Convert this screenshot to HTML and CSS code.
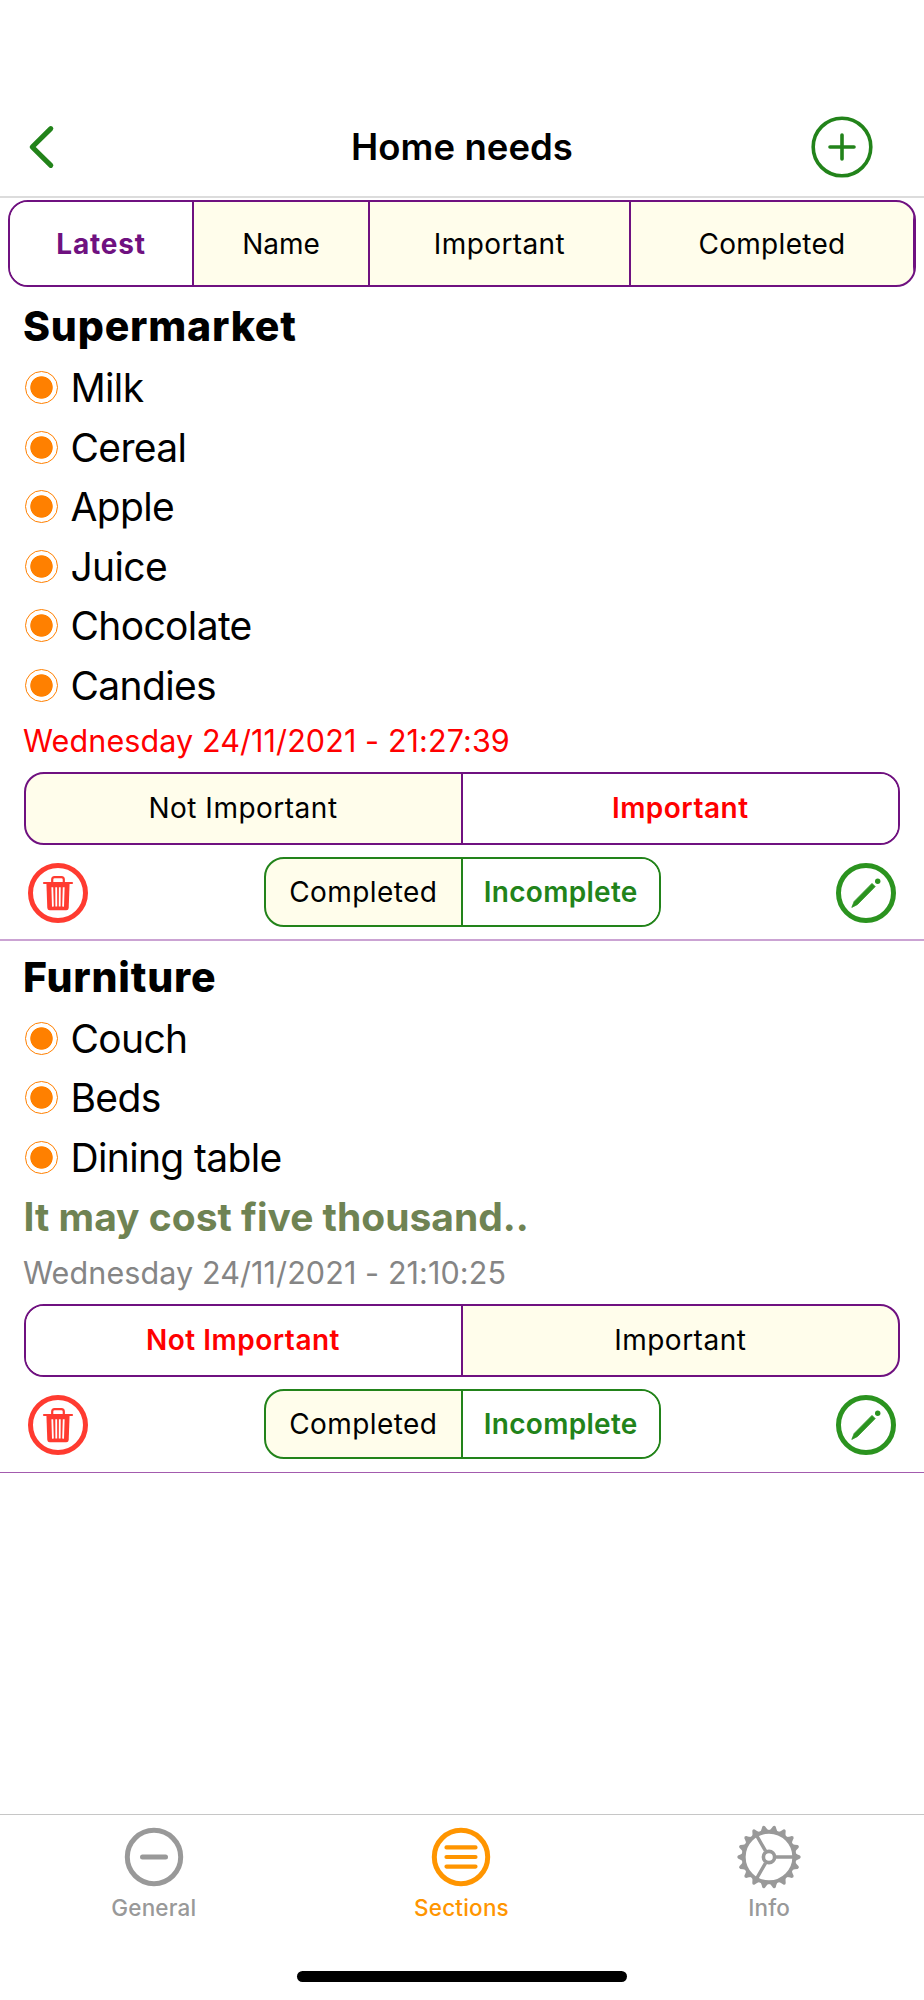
FILE: index.html
```html
<!DOCTYPE html>
<html lang="en">
<head>
<meta charset="utf-8">
<title>Home needs</title>
<link rel="stylesheet" href="styles.css">
</head>
<body>
<svg class="defs" width="0" height="0">
  <symbol id="trash" viewBox="0 0 60 60">
    <circle cx="30" cy="30" r="27.5" fill="none" stroke="#ff3b30" stroke-width="5"/>
    <path d="M24.2 19.5v-3q0-2.4 2.4-2.4h6.8q2.4 0 2.4 2.4v3" fill="none" stroke="#ff3b30" stroke-width="2.2"/>
    <path d="M16 20h28" stroke="#ff3b30" stroke-width="2.2" stroke-linecap="round"/>
    <path d="M18.4 20h23.2l-.9 25q-.2 2.3-2.4 2.3H21.7q-2.2 0-2.4-2.3z" fill="#ff3b30"/>
    <path d="M24.3 24.2l.6 19.4M28.2 24.2l.1 19.4M31.8 24.2l-.1 19.4M35.7 24.2l-.6 19.4" stroke="#fff" stroke-width="1.8"/>
  </symbol>
  <symbol id="edit" viewBox="0 0 60 60">
    <circle cx="30" cy="30" r="27.5" fill="none" stroke="#2b931f" stroke-width="5"/>
    <path d="M36 20.4L39.2 23.6L21.4 41.6L15.8 44.4L18.2 38.4z" fill="#2b931f" stroke="#2b931f" stroke-width=".8" stroke-linejoin="round"/>
    <circle cx="41.7" cy="18.3" r="2.7" fill="#2b931f"/>
  </symbol>
</svg>
<div class="screen">
  <header class="nav">
    <svg class="nav-back" width="30" height="48" viewBox="0 0 30 48"><path d="M24.8 5.6L6.2 24L24.8 42.4" fill="none" stroke="#22831a" stroke-width="5" stroke-linecap="round" stroke-linejoin="round"/></svg>
    <h1 class="nav-title">Home needs</h1>
    <svg class="nav-add" width="62" height="62" viewBox="0 0 62 62"><g fill="none" stroke="#22831a" stroke-linecap="round"><circle cx="31" cy="31" r="28.8" stroke-width="3.6"/><path d="M31 19v24M19 31h24" stroke-width="3.6"/></g></svg>
  </header>

  <div class="segment sort">
    <div class="seg selected latest">Latest</div>
    <div class="seg name">Name</div>
    <div class="seg important">Important</div>
    <div class="seg completed">Completed</div>
  </div>

  <section class="note">
    <h2 class="note-title">Supermarket</h2>
    <ul class="items">
      <li>Milk</li>
      <li>Cereal</li>
      <li>Apple</li>
      <li>Juice</li>
      <li>Chocolate</li>
      <li>Candies</li>
    </ul>
    <div class="date urgent">Wednesday 24/11/2021 - 21:27:39</div>
    <div class="segment priority">
      <div class="seg">Not Important</div>
      <div class="seg selected">Important</div>
    </div>
    <div class="actions">
      <svg class="action"><use href="#trash"/></svg>
      <div class="segment status">
        <div class="seg">Completed</div>
        <div class="seg selected">Incomplete</div>
      </div>
      <svg class="action"><use href="#edit"/></svg>
    </div>
  </section>

  <section class="note last">
    <h2 class="note-title">Furniture</h2>
    <ul class="items">
      <li>Couch</li>
      <li>Beds</li>
      <li>Dining table</li>
    </ul>
    <div class="remark">It may cost five thousand..</div>
    <div class="date">Wednesday 24/11/2021 - 21:10:25</div>
    <div class="segment priority">
      <div class="seg selected">Not Important</div>
      <div class="seg">Important</div>
    </div>
    <div class="actions">
      <svg class="action"><use href="#trash"/></svg>
      <div class="segment status">
        <div class="seg">Completed</div>
        <div class="seg selected">Incomplete</div>
      </div>
      <svg class="action"><use href="#edit"/></svg>
    </div>
  </section>

  <nav class="tabs">
    <div class="tab">
      <svg width="66" height="66" viewBox="-33 -33 66 66"><g fill="none" stroke="currentColor" stroke-width="5" stroke-linecap="round"><circle r="26.7"/><path d="M-11.5 0h23"/></g></svg>
      <span>General</span>
    </div>
    <div class="tab active">
      <svg width="66" height="66" viewBox="-33 -33 66 66"><g fill="none" stroke="currentColor" stroke-width="5"><circle r="26.7"/><path d="M-14.5 -9.6h29M-14.5 0h29M-14.5 9.6h29" stroke-width="4.2" stroke-linecap="round"/></g></svg>
      <span>Sections</span>
    </div>
    <div class="tab">
      <svg width="66" height="66" viewBox="-33 -33 66 66">
        <defs><path id="tooth" d="M26 -4.3Q28.5 -2.4 31 -1.4Q32.6 0 31 1.4Q28.5 2.4 26 4.3z"/></defs>
        <g fill="none" stroke="currentColor"><circle r="25.3" stroke-width="3.9"/><circle r="5.6" stroke-width="3.6"/><path d="M7 0h17M-3.5 6.06L-12 20.8M-3.5 -6.06L-12 -20.8" stroke-width="3.4"/></g>
        <g fill="currentColor">
          <use href="#tooth"/><use href="#tooth" transform="rotate(20)"/><use href="#tooth" transform="rotate(40)"/><use href="#tooth" transform="rotate(60)"/><use href="#tooth" transform="rotate(80)"/><use href="#tooth" transform="rotate(100)"/><use href="#tooth" transform="rotate(120)"/><use href="#tooth" transform="rotate(140)"/><use href="#tooth" transform="rotate(160)"/><use href="#tooth" transform="rotate(180)"/><use href="#tooth" transform="rotate(200)"/><use href="#tooth" transform="rotate(220)"/><use href="#tooth" transform="rotate(240)"/><use href="#tooth" transform="rotate(260)"/><use href="#tooth" transform="rotate(280)"/><use href="#tooth" transform="rotate(300)"/><use href="#tooth" transform="rotate(320)"/><use href="#tooth" transform="rotate(340)"/>
        </g>
      </svg>
      <span>Info</span>
    </div>
  </nav>
  <div class="home-indicator"></div>
</div>
</body>
</html>
```

FILE: styles.css
```css
*, *::before { box-sizing: border-box; }
body { margin: 0; background: #fff; color: #000; font-family: Inter, "Liberation Sans", sans-serif; }
h1, h2, ul { margin: 0; padding: 0; }
.defs { display: block; }
.screen { width: 924px; height: 2000px; display: flex; flex-direction: column; overflow: hidden; }

.nav { height: 198px; flex: none; padding: 98px 51px 0 26px; border-bottom: 2px solid #dcdcdc; display: grid; grid-template-columns: 64px 1fr 64px; align-items: center; }
.nav-title { font-size: 36.5px; line-height: 44px; font-weight: 600; text-align: center; padding-left: 25px; letter-spacing: 0.05px; }
.nav-add { justify-self: end; }

.segment { display: flex; flex: none; border: 2px solid #6f1180; border-radius: 20px; overflow: hidden; background: #fffdeb; font-size: 28px; letter-spacing: 0.4px; }
.seg { display: flex; align-items: center; justify-content: center; flex: 1; white-space: nowrap; }
.seg + .seg { border-left: 2px solid #6f1180; }
.seg.selected { background: #fff; font-weight: 500; letter-spacing: 0.7px; }
.sort { margin: 2px 8px 3px; height: 87px; }
.sort .seg.selected { color: #6f1180; font-weight: 700; letter-spacing: 0.8px; }
.sort .latest { flex: 0 0 182px; }
.sort .name { flex: 0 0 176px; letter-spacing: 0; }
.sort .important { flex: 0 0 261px; }
.sort .completed { border-right: 1px solid #6f1180; letter-spacing: 0.3px; }

.note { flex: none; padding: 8px 24px 12px 23px; border-bottom: 2px solid #cba3d3; }
.note.last { padding-bottom: 13px; border-bottom: 1px solid #a35bae; }
.note-title { font-size: 41px; line-height: 56px; font-weight: 800; margin-bottom: 4px; letter-spacing: 0.8px; }
.items { list-style: none; }
.items li { height: 59.5px; display: flex; align-items: center; gap: 13px; font-size: 39px; letter-spacing: -0.65px; }
.items li::before { content: ""; flex: none; width: 33px; height: 33px; margin-left: 1.5px; border: 1.5px solid #ff8000; border-radius: 50%; background: radial-gradient(circle, #ff8000 10.8px, #fff 11.6px); }
.remark { font-size: 39px; line-height: 60px; font-weight: 700; color: #6f8353; margin-left: 0.5px; }
.date { font-size: 30.5px; line-height: 50px; margin-bottom: 6px; color: #858585; letter-spacing: 0.1px; padding-top: 0.5px; }
.date.urgent { color: #f00; }
.priority { height: 73.5px; margin-left: 0.5px; }
.priority .seg { letter-spacing: 0.5px; }
.priority .seg:first-child { flex: 0 0 435px; }
.priority .seg.selected { color: #f00; font-weight: 600; }
.actions { display: flex; align-items: center; justify-content: space-between; margin: 11.5px 4px 0 5px; height: 70px; }
.action { width: 60px; height: 60px; margin-top: 3px; }
.status { width: 397px; height: 70px; border-color: #22831a; }
.status .seg + .seg { border-color: #22831a; }
.status .seg.selected { color: #22831a; font-weight: 600; letter-spacing: 0.3px; }

.tabs { margin-top: auto; flex: none; height: 157px; border-top: 1.5px solid #c6c6c6; display: grid; grid-template-columns: repeat(3, 1fr); padding: 9px 1px 0 0; }
.tab { display: flex; flex-direction: column; align-items: center; color: #999; font-size: 22.5px; font-weight: 500; letter-spacing: 0.2px; line-height: 30px; }
.tab svg { display: block; margin-bottom: 2.5px; }
.tab.active { color: #ff9500; }
.home-indicator { flex: none; width: 330px; height: 11px; margin: 0 auto 18px; border-radius: 6px; background: #000; }
```
